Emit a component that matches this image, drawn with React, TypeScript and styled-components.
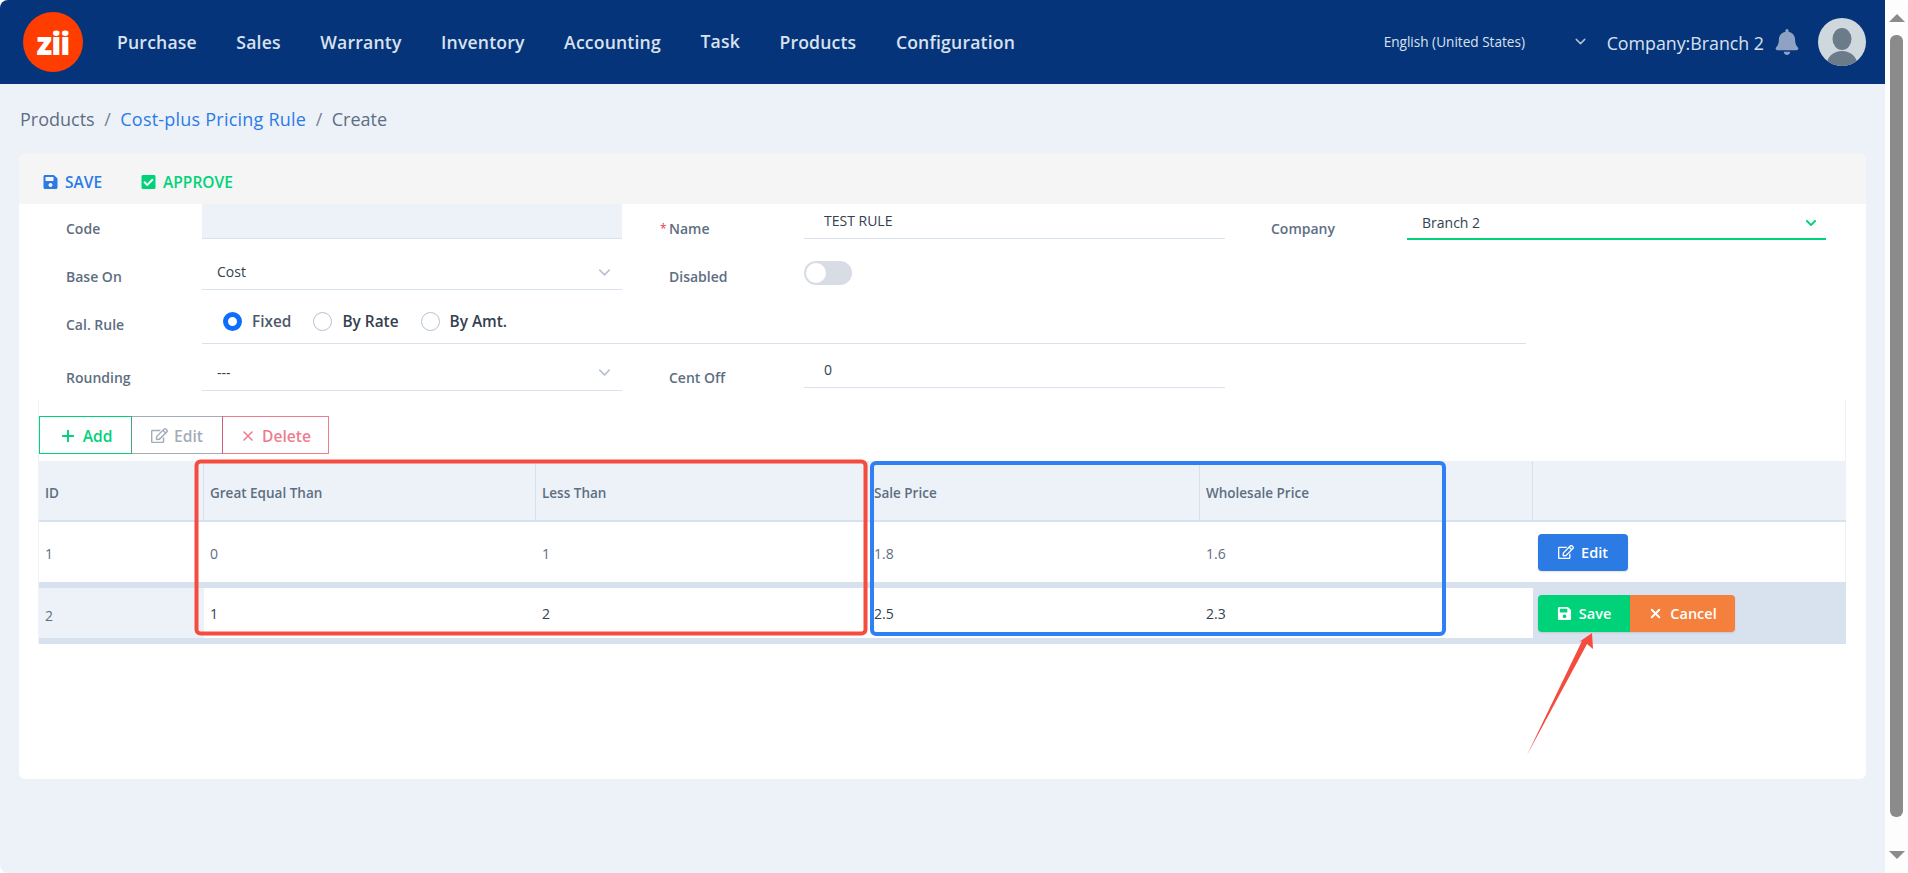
import React from "react";
import styled, { createGlobalStyle } from "styled-components";
import { FaSave, FaCheckSquare, FaRegEdit, FaBell, FaChevronDown } from "react-icons/fa";
import { ChevronDown, Plus, X } from "lucide-react";

const Global = createGlobalStyle`
  html, body { margin: 0; padding: 0; height: 100%; overflow: hidden; background: #ffffff; }
  body { font-family: "Open Sans", "Noto Sans", sans-serif; }
  * { box-sizing: border-box; }
`;

const Windowed = styled.div`
  position: relative;
  display: flex;
  width: 1908px;
  height: 873px;
  border-radius: 8px;
  overflow: hidden;
`;
const Page = styled.div`
  width: 1885px;
  background: #edf2f9;
  display: flex;
  flex-direction: column;
`;
const TopBar = styled.header`
  height: 84px;
  background: #06347a;
  display: flex;
  align-items: center;
  padding-left: 23px;
`;
const Logo = styled.div`
  width: 60px;
  height: 60px;
  border-radius: 50%;
  background: #ff3d00;
  color: #fff;
  font: 800 31px/62px "Open Sans", sans-serif;
  letter-spacing: -1px;
  text-align: center;
`;
const Nav = styled.nav`
  display: flex;
  gap: 39.5px;
  margin-left: 34px;
`;
const NavItem = styled.a<{ $up?: boolean }>`
  color: #d8e2ef;
  font-size: 17.6px;
  font-weight: 600;
  letter-spacing: 0.18px;
  position: relative;
  top: ${(p) => (p.$up ? "-1px" : "0")};
`;
const BarRight = styled.div`
  margin-left: auto;
  display: flex;
  align-items: center;
`;
const Lang = styled.div`
  display: flex;
  align-items: center;
  justify-content: space-between;
  width: 205px;
  margin-top: -2px;
  color: #d8e2ef;
  font-size: 13.6px;
  svg { color: #b6c1d2; }
`;
const CompanyName = styled.span`
  color: #d8e2ef;
  font-size: 17.8px;
  margin: 1px 0 0 18px;
`;
const BellIcon = styled(FaBell)`
  color: #8ea2c4;
  width: 24px;
  height: 26px;
  margin-left: 11px;
`;
const Avatar = styled.svg`
  width: 48px;
  height: 48px;
  margin: 0 19px;
  display: block;
`;
const Crumbs = styled.div`
  display: flex;
  align-items: center;
  height: 70px;
  padding-left: 20px;
  font-size: 18px;
  color: #5e6e82;
`;
const CrumbSep = styled.span`
  margin: 0 9.5px;
  color: #748194;
`;
const CrumbLink = styled.a`
  color: #2c7be5;
  letter-spacing: 0.22px;
`;
const Card = styled.section`
  width: 1847px;
  height: 625px;
  margin-left: 19px;
  background: #fff;
  border-radius: 6px;
  overflow: hidden;
`;
const ActionBar = styled.div`
  height: 50px;
  background: #f5f5f5;
  display: flex;
  align-items: center;
  padding: 6px 0 0 24px;
  gap: 39px;
`;
const ActionItem = styled.a<{ $color: string }>`
  display: flex;
  align-items: center;
  gap: 7px;
  color: ${(p) => p.$color};
  font-size: 15.5px;
  font-weight: 600;
  svg { width: 15px; height: 16px; }
`;
const FormGrid = styled.div`
  display: grid;
  grid-template-columns: 602px 603px 642px;
  grid-template-rows: 48px 44px 48px 56px;
`;
const Field = styled.div`
  display: flex;
  align-items: flex-start;
`;
const WideField = styled(Field)`
  grid-column: 1 / 4;
`;
const Label = styled.label<{ $top: number; $left: number; $width: number }>`
  width: ${(p) => p.$width}px;
  margin-top: ${(p) => p.$top}px;
  padding-left: ${(p) => p.$left}px;
  color: #5e6e82;
  font-size: 14px;
  font-weight: 600;
  line-height: 20px;
  flex: none;
`;
const Star = styled.span`
  color: #e63757;
  font-size: 12px;
  font-weight: 400;
  position: absolute;
  margin-left: -9px;
`;
const Control = styled.div<{
  $nudge?: number;
  $height: number;
  $width: number;
  $pad?: number;
  $right?: number;
  $accent?: boolean;
  $fill?: boolean;
}>`
  width: ${(p) => p.$width}px;
  height: ${(p) => p.$height}px;
  padding: ${(p) => p.$nudge ?? 0}px ${(p) => p.$right ?? 15}px 0 ${(p) => p.$pad ?? 15}px;
  background: ${(p) => (p.$fill ? "#edf2f9" : "#fff")};
  border-bottom: ${(p) => (p.$accent ? "2px solid #00d27a" : "1px solid #d8e2ef")};
  display: flex;
  align-items: center;
  justify-content: space-between;
  color: #344050;
  font-size: 14px;
  line-height: 20px;
  flex: none;
`;
const GreenChevron = styled(FaChevronDown)`
  color: #00d27a;
  width: 12px;
  height: 12px;
`;
const GreyChevron = styled(ChevronDown)`
  color: #b6c1d2;
  width: 19px;
  height: 19px;
  margin-right: -7px;
`;
const Toggle = styled.div`
  width: 48px;
  height: 24px;
  margin-top: 9px;
  border-radius: 12px;
  background: #d8dce5;
  padding: 2px;
`;
const Knob = styled.div`
  width: 20px;
  height: 20px;
  border-radius: 50%;
  background: #fff;
`;
const RadioLine = styled.div`
  width: 1324px;
  height: 48px;
  border-bottom: 1px solid #d8e2ef;
  display: flex;
  align-items: center;
  padding: 3px 0 0 21px;
`;
const RadioItem = styled.div`
  display: flex;
  align-items: center;
  gap: 10px;
  margin-right: 22px;
  color: #344050;
  font-size: 15.4px;
  font-weight: 600;
`;
const FixedLabel = styled.span`
  color: #4d5969;
`;
const RadioDot = styled.span<{ $on?: boolean }>`
  width: 19px;
  height: 19px;
  border-radius: 50%;
  background: #fff;
  border: ${(p) => (p.$on ? "5px solid #0d6efd" : "1px solid #b6c1d2")};
`;
const GridBox = styled.div`
  width: 1808px;
  margin-left: 19px;
  padding-top: 16px;
  border-left: 1px solid #edf2f9;
  border-right: 1px solid #edf2f9;
`;
const ButtonRow = styled.div`
  display: flex;
  height: 38px;
  margin-bottom: 7px;
`;
const OutlineButton = styled.button<{ $color: string; $w: number; $dim?: boolean }>`
  width: ${(p) => p.$w}px;
  height: 38px;
  margin-right: -1px;
  background: #fff;
  border: 1px solid ${(p) => p.$color};
  color: ${(p) => p.$color};
  opacity: ${(p) => (p.$dim ? 0.65 : 1)};
  font: 600 15.6px "Open Sans", sans-serif;
  display: flex;
  align-items: center;
  justify-content: center;
  gap: 6px;
  padding: 1px 0 0;
`;
const Table = styled.table`
  border-collapse: separate;
  border-spacing: 0;
  table-layout: fixed;
  width: 1807px;
  font-size: 14px;
`;
const Th = styled.th<{ $w: number; $line?: boolean }>`
  width: ${(p) => p.$w}px;
  height: 61px;
  padding: 4px 0 0 6px;
  background: #edf2f9;
  color: #5e6e82;
  font-size: 13.5px;
  font-weight: 600;
  text-align: left;
  border-bottom: 2px solid #d8e2ef;
  border-right: ${(p) => (p.$line ? "1px solid #d8e2ef" : "0")};
`;
const Td = styled.td`
  height: 60px;
  padding: 2px 0 0 6px;
  color: #5e6e82;
`;
const ActionTd = styled(Td)`
  padding: 0;
`;
const EditRowCell = styled.td`
  height: 62px;
  padding: 6px 0;
  background: #d8e2ef;
`;
const CellFill = styled.div<{ $grey?: boolean }>`
  height: 50px;
  padding: ${(p) => (p.$grey ? "4px 0 0 6px" : "0 0 0 6px")};
  background: ${(p) => (p.$grey ? "#edf2f9" : "#fff")};
  color: ${(p) => (p.$grey ? "#5e6e82" : "#344050")};
  display: flex;
  align-items: center;
`;
const ActionCell = styled.div`
  display: flex;
  padding-left: 5px;
`;
const SolidButton = styled.button<{ $bg: string; $w: number; $round: string }>`
  width: ${(p) => p.$w}px;
  height: 37px;
  border: 0;
  border-radius: ${(p) => p.$round};
  background: ${(p) => p.$bg};
  color: #fff;
  font: 600 14.5px "Open Sans", sans-serif;
  display: flex;
  align-items: center;
  justify-content: center;
  gap: 7px;
  padding: 0;
  box-shadow: 0 1px 2px rgba(0, 0, 0, 0.12);
`;
const ScrollTrack = styled.div`
  width: 23px;
  height: 873px;
  background: #fdfdfd;
  display: flex;
  flex-direction: column;
  align-items: center;
  padding: 14px 0;
`;
const ScrollThumb = styled.div`
  width: 13px;
  flex: 1;
  margin: 13px 0 34px;
  border-radius: 6px;
  background: #8b8b8b;
`;
const ArrowUp = styled.div`
  width: 0;
  height: 0;
  border-left: 8px solid transparent;
  border-right: 8px solid transparent;
  border-bottom: 8px solid #8b8b8b;
`;
const ArrowDown = styled(ArrowUp)`
  border-bottom: 0;
  border-top: 8px solid #8b8b8b;
`;
const Annotations = styled.svg`
  position: absolute;
  left: 0;
  top: 0;
  pointer-events: none;
`;

export default function App() {
  return (
    <>
      <Global />
      <Windowed>
        <Page>
          <TopBar>
            <Logo>zii</Logo>
            <Nav>
              <NavItem>Purchase</NavItem>
              <NavItem>Sales</NavItem>
              <NavItem>Warranty</NavItem>
              <NavItem>Inventory</NavItem>
              <NavItem>Accounting</NavItem>
              <NavItem $up>Task</NavItem>
              <NavItem>Products</NavItem>
              <NavItem>Configuration</NavItem>
            </Nav>
            <BarRight>
              <Lang>
                English (United States)
                <ChevronDown size={17} />
              </Lang>
              <CompanyName>Company:Branch 2</CompanyName>
              <BellIcon />
              <Avatar viewBox="0 0 48 48">
                <defs>
                  <clipPath id="avatarClip">
                    <circle cx="24" cy="24" r="24" />
                  </clipPath>
                </defs>
                <circle cx="24" cy="24" r="24" fill="#cfd8dc" />
                <ellipse cx="24" cy="21" rx="9.5" ry="11" fill="#6b7b8a" />
                <ellipse cx="24" cy="46" rx="15" ry="13" fill="#6b7b8a" clipPath="url(#avatarClip)" />
              </Avatar>
            </BarRight>
          </TopBar>
          <Crumbs>
            Products<CrumbSep>/</CrumbSep>
            <CrumbLink>Cost-plus Pricing Rule</CrumbLink>
            <CrumbSep>/</CrumbSep>Create
          </Crumbs>
          <Card>
            <ActionBar>
              <ActionItem $color="#2c7be5"><FaSave />SAVE</ActionItem>
              <ActionItem $color="#00d27a"><FaCheckSquare />APPROVE</ActionItem>
            </ActionBar>
            <FormGrid>
              <Field>
                <Label $top={15} $left={47} $width={183}>Code</Label>
                <Control $height={35} $width={420} $fill />
              </Field>
              <Field>
                <Label $top={15} $left={48} $width={183}><Star>*</Star>Name</Label>
                <Control $height={35} $width={421} $pad={20}><span>TEST RULE</span></Control>
              </Field>
              <Field>
                <Label $top={15} $left={47} $width={183}>Company</Label>
                <Control $height={36} $width={419} $accent $nudge={3} $right={9}><span>Branch 2</span><GreenChevron /></Control>
              </Field>

              <Field>
                <Label $top={15} $left={47} $width={183}>Base On</Label>
                <Control $height={38} $width={420} $nudge={3}><span>Cost</span><GreyChevron /></Control>
              </Field>
              <Field>
                <Label $top={15} $left={48} $width={183}>Disabled</Label>
                <Toggle><Knob /></Toggle>
              </Field>
              <div />

              <WideField>
                <Label $top={19} $left={47} $width={183}>Cal. Rule</Label>
                <RadioLine>
                  <RadioItem><RadioDot $on /><FixedLabel>Fixed</FixedLabel></RadioItem>
                  <RadioItem><RadioDot />By Rate</RadioItem>
                  <RadioItem><RadioDot />By Amt.</RadioItem>
                </RadioLine>
              </WideField>

              <Field>
                <Label $top={24} $left={47} $width={183}>Rounding</Label>
                <Control $height={47} $width={420} $nudge={11}><span>---</span><GreyChevron /></Control>
              </Field>
              <Field>
                <Label $top={24} $left={48} $width={183}>Cent Off</Label>
                <Control $height={44} $width={421} $pad={20} $nudge={9}><span>0</span></Control>
              </Field>
              <div />
            </FormGrid>
            <GridBox>
              <ButtonRow>
                <OutlineButton $color="#00d27a" $w={93}><Plus size={18} strokeWidth={2.6} />Add</OutlineButton>
                <OutlineButton $color="#748194" $w={92} $dim><FaRegEdit size={17} />Edit</OutlineButton>
                <OutlineButton $color="#e63757" $w={107} $dim><X size={16} strokeWidth={2.4} />Delete</OutlineButton>
              </ButtonRow>
              <Table>
                <thead>
                  <tr>
                    <Th $w={165} $line>ID</Th>
                    <Th $w={332} $line>Great Equal Than</Th>
                    <Th $w={332} $line>Less Than</Th>
                    <Th $w={332} $line>Sale Price</Th>
                    <Th $w={333} $line>Wholesale Price</Th>
                    <Th $w={313}></Th>
                  </tr>
                </thead>
                <tbody>
                  <tr>
                    <Td>1</Td>
                    <Td>0</Td>
                    <Td>1</Td>
                    <Td>1.8</Td>
                    <Td>1.6</Td>
                    <ActionTd>
                      <ActionCell>
                        <SolidButton $bg="#2c7be5" $w={90} $round="4px"><FaRegEdit size={16} />Edit</SolidButton>
                      </ActionCell>
                    </ActionTd>
                  </tr>
                  <tr>
                    <EditRowCell><CellFill $grey>2</CellFill></EditRowCell>
                    <EditRowCell><CellFill>1</CellFill></EditRowCell>
                    <EditRowCell><CellFill>2</CellFill></EditRowCell>
                    <EditRowCell><CellFill>2.5</CellFill></EditRowCell>
                    <EditRowCell><CellFill>2.3</CellFill></EditRowCell>
                    <EditRowCell>
                      <ActionCell>
                        <SolidButton $bg="#00d27a" $w={92} $round="4px 0 0 4px"><FaSave size={15} />Save</SolidButton>
                        <SolidButton $bg="#f5803e" $w={105} $round="0 4px 4px 0"><X size={15} strokeWidth={3} />Cancel</SolidButton>
                      </ActionCell>
                    </EditRowCell>
                  </tr>
                </tbody>
              </Table>
            </GridBox>
          </Card>
        </Page>
        <ScrollTrack>
          <ArrowUp />
          <ScrollThumb />
          <ArrowDown />
        </ScrollTrack>
        <Annotations width="1908" height="873" viewBox="0 0 1908 873">
          <rect x="196.5" y="461.5" width="669" height="172" rx="4" fill="none" stroke="#f44c3e" strokeWidth="4" />
          <rect x="872" y="463" width="572" height="171" rx="4" fill="none" stroke="#2f80f5" strokeWidth="4" />
          <polygon points="1592,633 1593,649 1587,644 1527,755 1582,641 1579,642" fill="#f44c3e" />
        </Annotations>
      </Windowed>
    </>
  );
}
